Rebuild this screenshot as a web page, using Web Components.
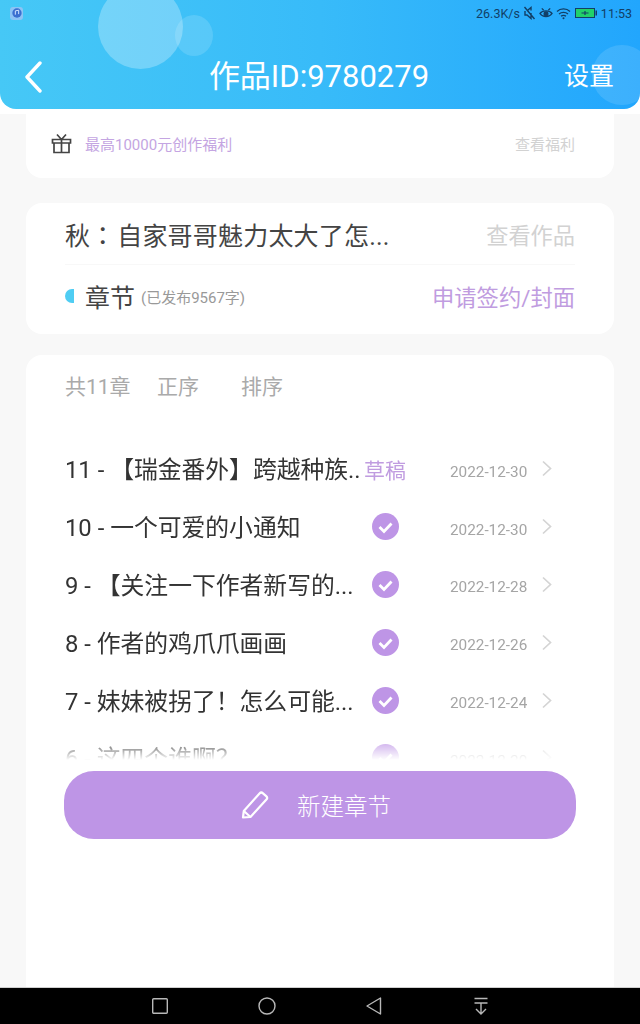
<!DOCTYPE html>
<html lang="zh">
<head>
<meta charset="utf-8">
<title>作品</title>
<style>
    html, body { margin: 0; padding: 0; height: 1024px; overflow: hidden; }
    body {
        background: linear-gradient(#fff 0 114px, #f8f8f8 114px);
        font-family: Roboto, "Noto Sans CJK SC", sans-serif;
        display: flex;
        flex-direction: column;
    }
</style>
</head>
<body>
<app-header work-id="9780279"></app-header>
<welfare-card></welfare-card>
<work-card></work-card>
<chapter-card>
    <chapter-row label="11 - 【瑞金番外】跨越种族.." date="2022-12-30" draft></chapter-row>
    <chapter-row label="10 - 一个可爱的小通知" date="2022-12-30"></chapter-row>
    <chapter-row label="9 - 【关注一下作者新写的..." date="2022-12-28"></chapter-row>
    <chapter-row label="8 - 作者的鸡爪爪画画" date="2022-12-26"></chapter-row>
    <chapter-row label="7 - 妹妹被拐了！怎么可能..." date="2022-12-24"></chapter-row>
    <chapter-row label="6 - 这四个谁啊？" date="2022-12-20"></chapter-row>
</chapter-card>
<nav-bar></nav-bar>

<script>
class AppHeader extends HTMLElement {
    constructor() {
        super();
        const shadowRoot = this.attachShadow({ mode: 'open' });
        shadowRoot.innerHTML = `
        <style>
            :host {
                display: block;
                position: relative;
                z-index: 2;
                height: 109px;
                flex: none;
                overflow: hidden;
                border-radius: 0 0 16px 16px;
                background: linear-gradient(90deg, #46c8f6 0%, #38bbf9 50%, #22a6fd 100%);
                color: #fff;
            }
            .bubble { position: absolute; border-radius: 50%; }
            .b1 { left: 98px; top: -16px; width: 85px; height: 85px; background: rgba(255,255,255,.27); }
            .b2 { left: 175px; top: 15px; width: 38px; height: 41px; background: rgba(255,255,255,.14); }
            .b3 { left: 592px; top: 45px; width: 60px; height: 60px; background: rgba(255,255,255,.12); }
            .status {
                position: relative;
                height: 26px;
                display: flex;
                align-items: center;
                gap: 3px;
                padding: 0 8px 0 10px;
                font-size: 12.500px;
                color: #123f66;
            }
            .app {
                width: 13px; height: 13px;
                margin-right: auto;
                border-radius: 3px;
                background: #8cc4f5;
                display: flex; align-items: center; justify-content: center;
            }
            .bar {
                position: relative;
                height: 83px;
                display: grid;
                grid-template-columns: 1fr auto 1fr;
                align-items: center;
                padding: 19px 26px 0 24px;
                box-sizing: border-box;
            }
            .title { font-size: 31px; line-height: 38px; }
            .set { justify-self: end; font-size: 25px; line-height: 32px; }
            svg { display: block; }
        </style>
        <span class="bubble b1"></span><span class="bubble b2"></span><span class="bubble b3"></span>
        <div class="status">
            <span class="app">
                <svg width="10" height="10" viewBox="0 0 9 9"><circle cx="4.500" cy="4.500" r="4.200" fill="#3b6fd0"/><path d="M3 6V2.600L6 2V5.500" fill="none" stroke="#cfe3ff" stroke-width=".9"/></svg>
            </span>
            <span>26.3K/s</span>
            <svg width="13" height="14" viewBox="0 0 13 14" fill="none" stroke="#123f66" stroke-width="1.400"><path d="M1.500 1l10 12M2 5v4h2l4 3.500V7M5 4l3-2.500v3"/></svg>
            <svg width="14" height="13" viewBox="0 0 15 13" fill="none" stroke="#123f66" stroke-width="1.400"><path d="M1 6.500C4 2.800 11 2.800 14 6.500C11 11 4 11 1 6.500Z"/><circle cx="7.500" cy="6.700" r="2" fill="#123f66"/><path d="M3 1l2 2M12 1l-2 2"/></svg>
            <svg width="15" height="13" viewBox="0 0 15 13" fill="none" stroke="#123f66" stroke-width="1.300"><path d="M1 4.500C4.500 1 10.500 1 14 4.500M3 7C5.500 4.800 9.500 4.800 12 7M5 9.300C6.300 8.200 8.700 8.200 10 9.300"/><circle cx="7.500" cy="11.200" r="1" fill="#123f66" stroke="none"/></svg>
            <svg width="22" height="10" viewBox="0 0 22 10" style="margin-left:1px"><rect x=".5" y=".5" width="19" height="9" fill="#22d06a" stroke="#123f66"/><rect x="20.500" y="2.500" width="1.500" height="5" fill="#123f66"/><path d="M6.500 5h7M10 3v4" stroke="#123f66" stroke-width="1.200"/></svg>
            <span style="margin-left:1px">11:53</span>
        </div>
        <div class="bar">
            <svg width="20" height="32" viewBox="0 0 20 32" fill="none" stroke="#fff" stroke-width="3.400" stroke-linecap="round" stroke-linejoin="round"><path d="M16 2L3 16L16 30"/></svg>
            <div class="title"></div>
            <div class="set">设置</div>
        </div>
        `;
    }
    connectedCallback() {
        this.shadowRoot.querySelector('.title').textContent = '作品ID:' + this.getAttribute('work-id');
    }
}

class WelfareCard extends HTMLElement {
    constructor() {
        super();
        const shadowRoot = this.attachShadow({ mode: 'open' });
        shadowRoot.innerHTML = `
        <style>
            :host {
                display: flex;
                flex: none;
                align-items: center;
                height: 69px;
                margin: 0 26px;
                padding: 0 39px 0 25px;
                background: #fff;
                border-radius: 0 0 16px 16px;
                font-size: 15px;
            }
            svg { margin-right: 13px; flex: none; }
            .text { color: #c4a5e2; flex: 1; }
            .more { color: #d2d2d2; }
        </style>
        <svg width="21" height="21" viewBox="0 0 21 21" fill="none" stroke="#444" stroke-width="1.700"><path d="M1.500 6.500h18v3.500h-18zM3 10v9.500h15V10M10.500 6.500v13M10.500 6.500L6 1.500M10.500 6.500L15 1.500"/></svg>
        <span class="text">最高10000元创作福利</span>
        <span class="more">查看福利</span>
        `;
    }
}

class WorkCard extends HTMLElement {
    constructor() {
        super();
        const shadowRoot = this.attachShadow({ mode: 'open' });
        shadowRoot.innerHTML = `
        <style>
            :host {
                display: block;
                flex: none;
                height: 131px;
                margin: 25px 26px 0;
                padding: 0 39px;
                background: #fff;
                border-radius: 16px;
            }
            .row { display: flex; align-items: center; justify-content: space-between; }
            .top { height: 61px; border-bottom: 1px solid #f8f8f8; }
            .name { font-size: 25px; letter-spacing: .2px; color: #444; }
            .colon { font-family: "Noto Sans CJK TC", sans-serif; letter-spacing: 2px; }
            .view { font-size: 22.200px; color: #d2d2d2; }
            .bottom { height: 62px; }
            .left { display: flex; align-items: center; }
            .dot { width: 9px; height: 14px; margin-right: 11px; background: #4fcdf3; border-radius: 9px 0 0 9px; }
            .sec { font-size: 25px; color: #444; margin-right: 6px; }
            .count { font-size: 15px; color: #999; }
            .apply { font-size: 22.300px; color: #c09ce0; }
        </style>
        <div class="row top">
            <span class="name">秋<span class="colon" lang="zh-Hant">：</span>自家哥哥魅力太大了怎...</span>
            <span class="view">查看作品</span>
        </div>
        <div class="row bottom">
            <span class="left"><span class="dot"></span><span class="sec">章节</span><span class="count">(已发布9567字)</span></span>
            <span class="apply">申请签约/封面</span>
        </div>
        `;
    }
}

class ChapterCard extends HTMLElement {
    constructor() {
        super();
        const shadowRoot = this.attachShadow({ mode: 'open' });
        shadowRoot.innerHTML = `
        <style>
            :host {
                display: flex;
                flex-direction: column;
                flex: 1;
                min-height: 0;
                margin: 21px 26px 0;
                padding: 0 38px 0 39px;
                background: #fff;
                border-radius: 16px 16px 0 0;
            }
            .head { flex: none; display: flex; height: 60px; align-items: center; font-size: 21px; color: #aaa; }
            .head span:nth-child(1) { width: 92px; }
            .head span:nth-child(2) { width: 84px; }
            .list {
                flex: none;
                height: 345px;
                padding-top: 25px;
                box-sizing: border-box;
                overflow: hidden;
                -webkit-mask-image: linear-gradient(#000 calc(100% - 24px), transparent 100%);
                mask-image: linear-gradient(#000 calc(100% - 24px), transparent 100%);
            }
            .add {
                flex: none;
                display: flex;
                align-items: center;
                justify-content: center;
                gap: 28px;
                height: 68px;
                width: 512px;
                box-sizing: border-box;
                margin: 11px 0 0 -1px;
                padding-right: 8px;
                background: #be95e6;
                border-radius: 30px;
                color: #fff;
                font-size: 23.500px;
                font-weight: 300;
            }
        </style>
        <div class="head"><span>共11章</span><span>正序</span><span>排序</span></div>
        <div class="list"><slot></slot></div>
        <div class="add">
            <svg width="28" height="28" viewBox="0 0 28 28" fill="none" stroke="#fff" stroke-width="2.200" stroke-linejoin="round"><path d="M2 26.500l.8-6.500L18.500 2.500a2.500 2.500 0 0 1 3.500-.2l3.200 2.800a2.500 2.500 0 0 1 .2 3.500L9.500 26z"/><path d="M2.800 20L9.500 26"/></svg>
            <span>新建章节</span>
        </div>
        `;
    }
}

class ChapterRow extends HTMLElement {
    constructor() {
        super();
        const shadowRoot = this.attachShadow({ mode: 'open' });
        shadowRoot.innerHTML = `
        <style>
            :host { display: flex; align-items: center; height: 57.800px; }
            .label { width: 299px; flex: none; margin-bottom: 2px; font-size: 23.800px; color: #333; white-space: nowrap; overflow: hidden; }
            .state { width: 42px; flex: none; display: flex; justify-content: center; font-size: 21px; color: #c09ce0; }
            .date { margin: 6px 0 0 44px; width: 92px; flex: none; font-size: 15.300px; color: #a5a5a5; }
            svg { display: block; }
        </style>
        <span class="label"></span>
        <span class="state"></span>
        <span class="date"></span>
        <svg width="10" height="17" viewBox="0 0 10 17" fill="none" stroke="#d4d4d4" stroke-width="1.700"><path d="M1 1.500l7.500 7-7.500 7"/></svg>
        `;
    }
    connectedCallback() {
        const root = this.shadowRoot;
        root.querySelector('.label').textContent = this.getAttribute('label');
        root.querySelector('.date').textContent = this.getAttribute('date');
        root.querySelector('.state').innerHTML = this.hasAttribute('draft') ? '草稿'
            : '<svg width="27" height="27" viewBox="0 0 27 27"><circle cx="13.500" cy="13.500" r="13.500" fill="#be95e6"/><path d="M7.500 14l4.500 4.500 7.500-8" fill="none" stroke="#fff" stroke-width="2.800"/></svg>';
    }
}

class NavBar extends HTMLElement {
    constructor() {
        super();
        const shadowRoot = this.attachShadow({ mode: 'open' });
        shadowRoot.innerHTML = `
        <style>
            :host {
                display: block;
                flex: none;
                height: 37px;
                box-sizing: border-box;
                border-top: 1px solid #cfcfcf;
                background: #000;
            }
            .items {
                display: grid;
                grid-template-columns: repeat(4, 107px);
                justify-content: center;
                justify-items: center;
                align-items: center;
                height: 36px;
            }
            svg { display: block; }
        </style>
        <div class="items">
            <svg width="16" height="16" viewBox="0 0 16 16" fill="none" stroke="#b8b8b8" stroke-width="1.400"><rect x=".7" y=".7" width="14.600" height="14.600" rx="1"/></svg>
            <svg width="18" height="18" viewBox="0 0 18 18" fill="none" stroke="#b8b8b8" stroke-width="1.400"><circle cx="9" cy="9" r="8"/></svg>
            <svg width="16" height="18" viewBox="0 0 16 18" fill="none" stroke="#b8b8b8" stroke-width="1.400" stroke-linejoin="round"><path d="M14.500 1v16L1 9z"/></svg>
            <svg width="16" height="18" viewBox="0 0 16 18" fill="none" stroke="#b8b8b8" stroke-width="1.400"><path d="M1.500 1.500h13M1.500 6h13M8 6v11M3 12l5 5 5-5"/></svg>
        </div>
        `;
    }
}

window.customElements.define('app-header', AppHeader);
window.customElements.define('welfare-card', WelfareCard);
window.customElements.define('work-card', WorkCard);
window.customElements.define('chapter-card', ChapterCard);
window.customElements.define('chapter-row', ChapterRow);
window.customElements.define('nav-bar', NavBar);
</script>
</body>
</html>
